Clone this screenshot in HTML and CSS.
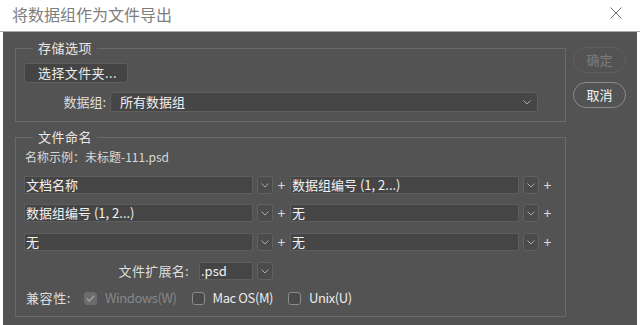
FILE: index.html
```html
<!DOCTYPE html>
<html lang="zh-CN">
<head>
    <meta charset="utf-8">
    <title>将数据组作为文件导出</title>
    <link rel="stylesheet" href="styles.css">
</head>
<body>
<div class="titlebar">
    <h1 class="title">将数据组作为文件导出</h1>
    <svg class="close" width="12" height="12" viewBox="0 0 12 12">
        <path d="M0.5 0.5 L11.5 11.5 M11.5 0.5 L0.5 11.5" stroke="#6f6f6f" stroke-width="1" fill="none"/>
    </svg>
</div>
<div class="dialog">
    <div class="main">
        <fieldset class="group group-save">
            <legend>存储选项</legend>
            <button class="btn-folder">选择文件夹...</button>
            <div class="set-row">
                <span class="lbl lbl-set">数据组:</span>
                <div class="select">
                    <span>所有数据组</span>
                    <svg class="chev" width="8" height="5" viewBox="0 0 8 5"><path d="M0.5 0.5 L4 4 L7.5 0.5" stroke="#a8a8a8" fill="none"/></svg>
                </div>
            </div>
        </fieldset>

        <fieldset class="group group-name">
            <legend>文件命名</legend>
            <p class="example">名称示例：未标题-111.psd</p>

            <div class="name-row">
                <span class="input">文档名称</span>
                <span class="drop"><svg class="chev" width="8" height="5" viewBox="0 0 8 5"><path d="M0.5 0.5 L4 4 L7.5 0.5" stroke="#a8a8a8" fill="none"/></svg></span>
                <span class="plus">+</span>
                <span class="input">数据组编号 (1, 2...)</span>
                <span class="drop"><svg class="chev" width="8" height="5" viewBox="0 0 8 5"><path d="M0.5 0.5 L4 4 L7.5 0.5" stroke="#a8a8a8" fill="none"/></svg></span>
                <span class="plus">+</span>
            </div>
            <div class="name-row">
                <span class="input">数据组编号 (1, 2...)</span>
                <span class="drop"><svg class="chev" width="8" height="5" viewBox="0 0 8 5"><path d="M0.5 0.5 L4 4 L7.5 0.5" stroke="#a8a8a8" fill="none"/></svg></span>
                <span class="plus">+</span>
                <span class="input">无</span>
                <span class="drop"><svg class="chev" width="8" height="5" viewBox="0 0 8 5"><path d="M0.5 0.5 L4 4 L7.5 0.5" stroke="#a8a8a8" fill="none"/></svg></span>
                <span class="plus">+</span>
            </div>
            <div class="name-row row-last">
                <span class="input">无</span>
                <span class="drop"><svg class="chev" width="8" height="5" viewBox="0 0 8 5"><path d="M0.5 0.5 L4 4 L7.5 0.5" stroke="#a8a8a8" fill="none"/></svg></span>
                <span class="plus">+</span>
                <span class="input">无</span>
                <span class="drop"><svg class="chev" width="8" height="5" viewBox="0 0 8 5"><path d="M0.5 0.5 L4 4 L7.5 0.5" stroke="#a8a8a8" fill="none"/></svg></span>
                <span class="plus">+</span>
            </div>

            <div class="ext-row">
                <span class="lbl lbl-ext">文件扩展名:</span>
                <span class="input input-ext">.psd</span>
                <span class="drop"><svg class="chev" width="8" height="5" viewBox="0 0 8 5"><path d="M0.5 0.5 L4 4 L7.5 0.5" stroke="#a8a8a8" fill="none"/></svg></span>
            </div>

            <div class="compat-row">
                <span class="lbl lbl-compat">兼容性:</span>
                <span class="check check-off">
                    <i class="box box-on"><svg width="9" height="7" viewBox="0 0 9 7"><path d="M0.8 3.4 L3.4 6 L8.2 0.8" stroke="#9c9c9c" stroke-width="1.6" fill="none"/></svg></i>
                    Windows(W)
                </span>
                <span class="check"><i class="box"></i>Mac OS(M)</span>
                <span class="check"><i class="box"></i>Unix(U)</span>
            </div>
        </fieldset>
    </div>

    <div class="side">
        <button class="pill" disabled>确定</button>
        <button class="pill">取消</button>
    </div>
</div>
</body>
</html>
```

FILE: styles.css
```css
html, body {
    margin: 0;
    padding: 0;
    width: 640px;
    height: 325px;
    overflow: hidden;
    background-color: #ffffff;
    font-family: "Noto Sans CJK SC", "Noto Sans", sans-serif;
    font-size: 13px;
}

.titlebar {
    display: flex;
    align-items: center;
    height: 31px;
    border-bottom: 1px solid #a9a9a9;
    background-color: #ffffff;
}

.title {
    flex: 1;
    margin: 0 0 4px 12px;
    font-size: 16px;
    font-weight: normal;
    line-height: 22px;
    color: #7e7e7e;
}

.close {
    display: block;
    margin: 0 18px 6px 0;
}

.dialog {
    display: flex;
    height: 293px;
    margin: 0 3px;
    background-color: #535353;
    color: #e4e4e4;
}

.main {
    width: 551px;
    padding: 8px 0 0 12px;
}

/* fieldsets */
.group {
    margin: 0;
    padding: 0 8px 9px 8px;
    border: 1px solid #696969;
    min-inline-size: 0;
}

.group legend {
    margin-left: 9px;
    padding: 0 5px;
    font-size: 13px;
    line-height: 16px;
    letter-spacing: 0.5px;
    color: #e8e8e8;
}

.group-name {
    margin-top: 7px;
}

.btn-folder {
    display: block;
    width: 104px;
    height: 20px;
    margin-top: 7px;
    padding: 0 0 0 13px;
    text-align: left;
    border: 1px solid #5f5f5f;
    border-radius: 3px;
    background-color: #444444;
    font-family: inherit;
    font-size: 13px;
    line-height: 18px;
    letter-spacing: 0.4px;
    color: #ececec;
}

.set-row {
    display: flex;
    align-items: center;
    margin-top: 9px;
}

.lbl {
    line-height: 18px;
    color: #dedede;
    white-space: nowrap;
}

.lbl-set {
    width: 82px;
    margin-right: 4px;
    text-align: right;
}

.select {
    display: flex;
    align-items: center;
    justify-content: space-between;
    box-sizing: border-box;
    width: 428px;
    height: 20px;
    padding: 0 6px 0 9px;
    border: 1px solid #5e5e5e;
    border-radius: 3px;
    background-color: #464646;
    line-height: 18px;
    color: #f0f0f0;
}

.chev {
    display: block;
}

.example {
    margin: 3px 0 0 1px;
    font-size: 12px;
    line-height: 18px;
    color: #d9d9d9;
}

/* naming rows */
.name-row {
    display: flex;
    align-items: center;
    height: 18px;
    margin-top: 10px;
}

.row-last {
    margin-top: 11px;
}

.input {
    box-sizing: border-box;
    width: 229px;
    height: 18px;
    padding-left: 1px;
    border: 1px solid #5d5d5d;
    background-color: #454545;
    line-height: 16px;
    color: #f2f2f2;
    white-space: nowrap;
}

.drop {
    display: flex;
    align-items: center;
    justify-content: center;
    box-sizing: border-box;
    width: 16px;
    height: 18px;
    margin-left: 4px;
    border: 1px solid #616161;
    border-radius: 3px;
    background-color: #4b4b4b;
}

.plus {
    width: 17px;
    text-align: center;
    font-size: 14px;
    line-height: 18px;
    color: #dadada;
}

.ext-row {
    display: flex;
    align-items: center;
    height: 18px;
    margin-top: 11px;
}

.lbl-ext {
    width: 165px;
    margin-right: 10px;
    text-align: right;
    letter-spacing: 0.3px;
}

.input-ext {
    width: 54px;
}

.compat-row {
    display: flex;
    align-items: center;
    height: 18px;
    margin-top: 9px;
    padding-left: 2px;
}

.lbl-compat {
    letter-spacing: 0.6px;
}

.check {
    display: flex;
    align-items: center;
    margin-left: 15px;
    line-height: 18px;
    letter-spacing: -0.4px;
    color: #ececec;
}

.check-off {
    margin-left: 13px;
    color: #878787;
}

.box {
    display: flex;
    align-items: center;
    justify-content: center;
    box-sizing: border-box;
    width: 13px;
    height: 13px;
    margin-right: 8px;
    border: 1px solid #8c8c8c;
    border-radius: 3px;
    background-color: #4a4a4a;
}

.box-on {
    border-color: #6c6c6c;
    background-color: #6c6c6c;
}

/* right buttons */
.side {
    display: flex;
    flex-direction: column;
    gap: 9px;
    width: 53px;
    margin-left: 7px;
    padding-top: 15px;
}

.pill {
    height: 26px;
    padding: 0;
    border: 1px solid #8a8a8a;
    border-radius: 13px;
    background-color: #535353;
    font-family: inherit;
    font-size: 13px;
    line-height: 24px;
    color: #f4f4f4;
}

.pill:disabled {
    border-color: #5f5f5f;
    color: #7c7c7c;
}
```
